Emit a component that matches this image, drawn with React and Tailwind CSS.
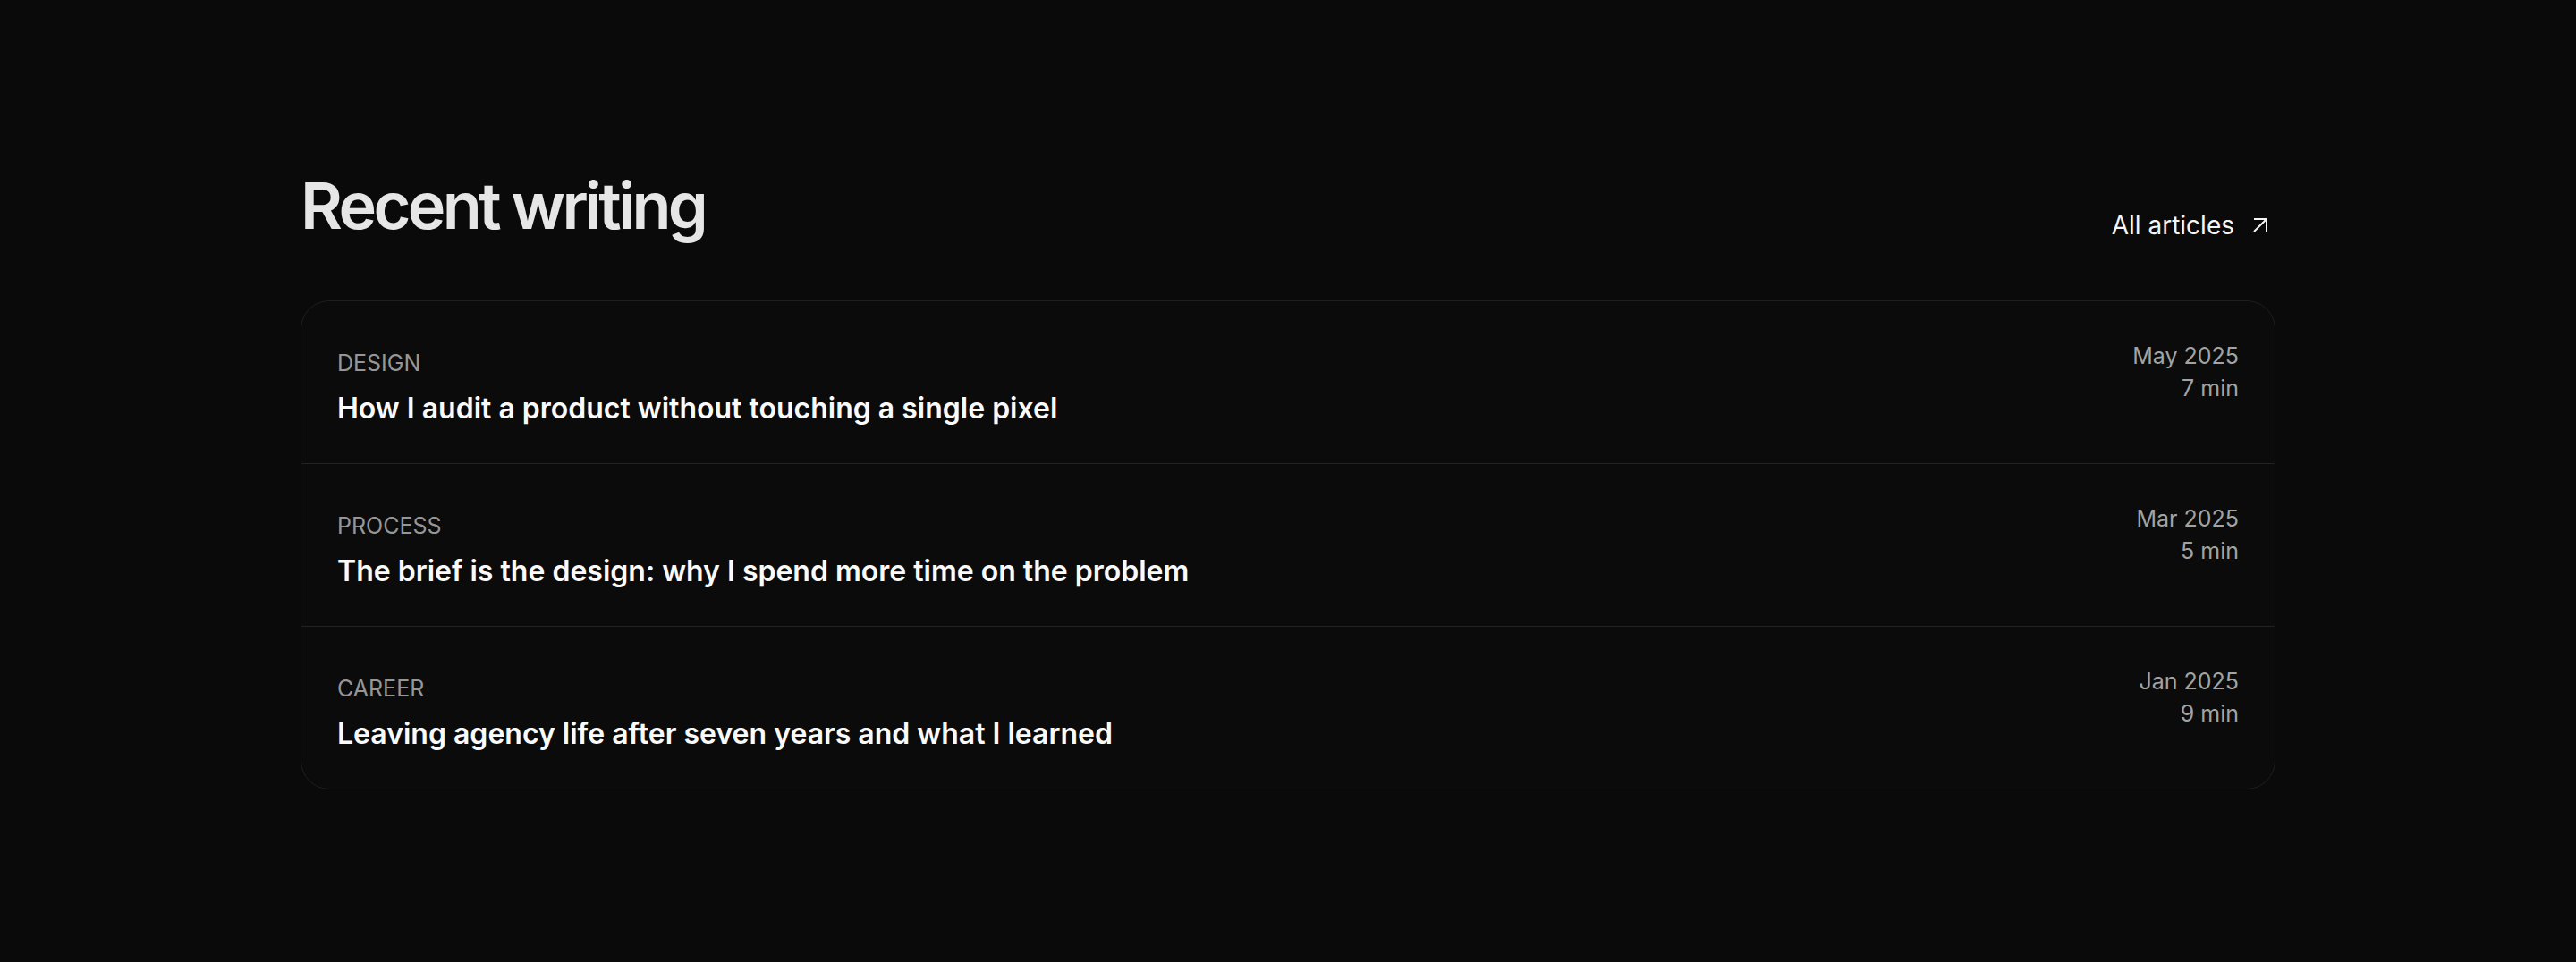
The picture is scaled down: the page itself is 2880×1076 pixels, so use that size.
const posts = [
  { tag: 'DESIGN', title: 'How I audit a product without touching a single pixel', date: 'May 2025', read: '7 min' },
  { tag: 'PROCESS', title: 'The brief is the design: why I spend more time on the problem', date: 'Mar 2025', read: '5 min' },
  { tag: 'CAREER', title: 'Leaving agency life after seven years and what I learned', date: 'Jan 2025', read: '9 min' },
]

export default function App() {
  return (
    <div className="min-h-screen bg-[#0a0a0a] font-['Inter',sans-serif] pt-[194px]">
      <section className="w-[2208px] mx-auto">
        <div className="flex items-end justify-between mb-[70px]">
          <h2 className="text-[72px] leading-none font-semibold tracking-[-0.05em] text-[#e6e6e6]">
            Recent writing
          </h2>
          <a href="#" className="flex items-center gap-[21px] text-[28px] leading-none text-[#f5f5f5]">
            All articles
            <svg width="16" height="16" viewBox="0 0 16 16" fill="none" stroke="currentColor" strokeWidth="2" className="mr-[9px]">
              <path d="M1 1h14v14M1 15 15 1" />
            </svg>
          </a>
        </div>

        <div className="rounded-[32px] border border-[#1e1e1e] bg-[#0b0b0b] overflow-hidden">
          {posts.map((p, i) => (
            <div
              key={p.tag}
              className={`flex items-start justify-between px-10 pt-[43px] pb-[39px] ${i > 0 ? 'border-t border-[#222222]' : ''}`}
            >
              <div className="pt-2">
                <div className="text-[25px] leading-[36px] text-[#969696]">{p.tag}</div>
                <div className="mt-[10px] text-[32px] leading-[45px] font-semibold text-[#fafafa]">
                  {p.title}
                </div>
              </div>
              <div className="text-right text-[25px] leading-[36px] text-[#a3a3a3]">
                <div>{p.date}</div>
                <div>{p.read}</div>
              </div>
            </div>
          ))}
        </div>
      </section>
    </div>
  )
}
